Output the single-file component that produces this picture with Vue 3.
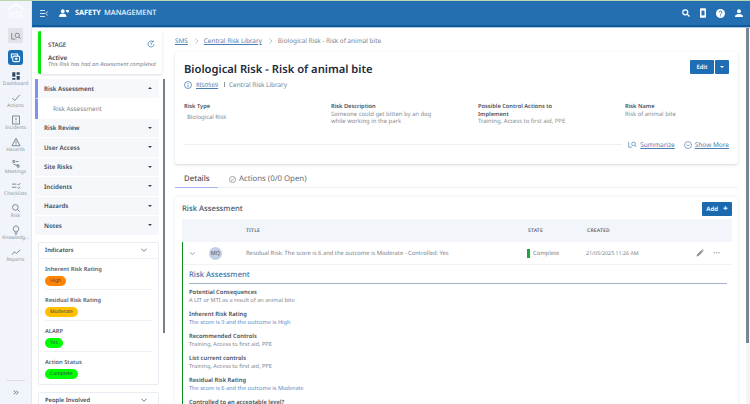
<script setup>
const nav = [
  { label: 'Dashboard', d: 'M2 2h5v7H2zM9 2h5v4H9zM2 11h5v3H2zM9 8h5v6H9z', fill: true },
  { label: 'Actions', d: 'M2 8l4 4 8-9' },
  { label: 'Incidents', d: 'M2.500 1.500h11v13h-11zM8 4.500v4M8 10.500v1.500' },
  { label: 'Hazards', d: 'M8 2l6.500 12h-13zM8 6v4.500M8 11.500v1' },
  { label: 'Meetings', d: 'M3 2.500h3v3H3zM4 8l4 2 4-1M10 10h3v3h-3zM8 4h4' },
  { label: 'Checklists', d: 'M1.500 5h7M1.500 10h7M10.500 5l1.500 1.500 2.500-3M10.500 10.500l1.500 1.500 2.500-3' },
  { label: 'Risk', d: 'M7 2.500a4.500 4.500 0 1 0 0 9 4.500 4.500 0 0 0 0-9zM10.500 10.500l3.500 3.500' },
  { label: 'Knowledg...', d: 'M8 1.500a4.500 4.500 0 0 0-2.500 8.200V11h5V9.700A4.500 4.500 0 0 0 8 1.500zM6 13h4M7 15h2' },
  { label: 'Reports', d: 'M1.500 12.500l4-5 3 3 6-6' }
]
const sections = ['Risk Review', 'User Access', 'Site Risks', 'Incidents', 'Hazards', 'Notes']
const indicators = [
  { label: 'Inherent Risk Rating', value: 'High', tone: 'orange' },
  { label: 'Residual Risk Rating', value: 'Moderate', tone: 'amber' },
  { label: 'ALARP', value: 'Yes', tone: 'green' },
  { label: 'Action Status', value: 'Complete', tone: 'green' }
]
const fields = [
  { label: 'Risk Type', lines: ['Biological Risk'], cls: 'indent' },
  { label: 'Risk Description', lines: ['Someone could get bitten by an dog', 'while working in the park'] },
  { label: 'Possible Control Actions to Implement', lines: ['Training, Access to first aid, PPE'] },
  { label: 'Risk Name', lines: ['Risk of animal bite'] }
]
const details = [
  { label: 'Potential Consequences', value: 'A LIT or MTI as a result of an animal bite' },
  { label: 'Inherent Risk Rating', value: 'The score is 9 and the outcome is High', link: true },
  { label: 'Recommended Controls', value: 'Training, Access to first aid, PPE' },
  { label: 'List current controls', value: 'Training, Access to first aid, PPE' },
  { label: 'Residual Risk Rating', value: 'The score is 6 and the outcome is Moderate', link: true },
  { label: 'Controlled to an acceptable level?', value: 'Yes' }
]
</script>

<template>
  <div class="app">
    <aside class="rail">
      <div class="logo">
        <svg width="18" height="6" viewBox="0 0 18 6"><path d="M1 5L9 1l8 4" fill="none" stroke="#fff" stroke-width="1.2" /></svg>
        <span>HSI</span>
      </div>
      <button class="rail-search">
        <svg width="10" height="8" viewBox="0 0 16 13" fill="none" stroke="#6f7d8c" stroke-width="1.400"><path d="M1 1.500v10h6" /><circle cx="10" cy="5.500" r="3.500" /><path d="M12.500 8l3 3" /></svg>
      </button>
      <button class="rail-active">
        <svg width="11" height="11" viewBox="0 0 16 16" fill="none" stroke="#fff" stroke-width="1.500"><path d="M2 9V3h9v3" /><rect x="4" y="6" width="10" height="8" rx="2" /><path d="M9 8v4M7 10h4" /></svg>
      </button>
      <nav class="rail-nav">
        <a v-for="item in nav" :key="item.label" class="rail-item">
          <svg width="10" height="10" viewBox="0 0 16 16" :fill="item.fill ? '#2c4a63' : 'none'" :stroke="item.fill ? 'none' : '#56677a'" stroke-width="1.200"><path :d="item.d" /></svg>
          <span>{{ item.label }}</span>
        </a>
      </nav>
      <div class="rail-foot">
        <svg width="6" height="5" viewBox="0 0 8 7" fill="none" stroke="#47576a" stroke-width="1.200"><path d="M1 1l2.500 2.500L1 6M4.500 1L7 3.500 4.500 6" /></svg>
      </div>
    </aside>

    <div class="shell">
      <header class="topbar">
        <div class="brand">
          <svg class="menu" width="8" height="7" viewBox="0 0 8 7" fill="none" stroke="#cfe0f0" stroke-width="1"><path d="M0 .500h5M0 3.500h5M0 6.500h5" /><path d="M7.500 1.500L6 3.500l1.500 2" /></svg>
          <svg width="10" height="8" viewBox="0 0 16 13" fill="#fff"><circle cx="6" cy="3.500" r="3" /><path d="M0 13c0-4 2.500-5.500 6-5.500s6 1.500 6 5.500zM11 1.500h5v2.500l-2 3-1-2.500h-2z" /></svg>
          <strong>SAFETY</strong><span>MANAGEMENT</span>
        </div>
        <div class="top-icons">
          <svg width="8" height="8" viewBox="0 0 16 16" fill="none" stroke="#fff" stroke-width="2.500"><circle cx="6.500" cy="6.500" r="5" /><path d="M10.500 10.500L15 15" /></svg>
          <svg width="6" height="10" viewBox="0 0 10 16"><rect width="10" height="16" rx="1.500" fill="#fff" /><rect x="2.500" y="4" width="5" height="8" fill="#2d72b2" /></svg>
          <svg width="9" height="9" viewBox="0 0 16 16"><circle cx="8" cy="8" r="8" fill="#fff" /><path d="M5.500 6a2.500 2.500 0 1 1 3.700 2.200C8.400 8.700 8 9 8 10M8 11.500V13" fill="none" stroke="#2d72b2" stroke-width="1.600" /></svg>
          <svg width="8" height="8" viewBox="0 0 16 16" fill="#fff"><circle cx="8" cy="4.500" r="4" /><path d="M0 16c0-4.500 3-6 8-6s8 1.500 8 6z" /></svg>
        </div>
      </header>

      <div class="workspace">
        <aside class="side">
          <section class="stage">
            <div class="stage-top">
              <span>STAGE</span>
              <svg width="8" height="8" viewBox="0 0 16 16" fill="none" stroke="#3f79b5" stroke-width="1.500"><path d="M14 8a6 6 0 1 1-2-4.500M12.500 1v3h-3M8 5v3l2 1" /></svg>
            </div>
            <b>Active</b>
            <em>This Risk has had an Assessment completed</em>
          </section>

          <div class="side-scroll">
            <div class="accordion">
              <div class="acc-row acc-open"><span>Risk Assessment</span><i class="caret up"></i></div>
              <div class="acc-sub">Risk Assessment</div>
              <div v-for="s in sections" :key="s" class="acc-row"><span>{{ s }}</span><i class="caret"></i></div>
            </div>

            <section class="panel">
              <div class="panel-head">
                <span>Indicators</span>
                <svg width="6" height="4" viewBox="0 0 7 4" fill="none" stroke="#54636f"><path d="M.500.500l3 3 3-3" /></svg>
              </div>
              <div v-for="ind in indicators" :key="ind.label" class="indicator">
                <label>{{ ind.label }}</label>
                <span class="pill" :class="ind.tone">{{ ind.value }}</span>
              </div>
            </section>

            <section class="panel people">
              <div class="panel-head">
                <span>People Involved</span>
                <svg width="6" height="4" viewBox="0 0 7 4" fill="none" stroke="#54636f"><path d="M.500.500l3 3 3-3" /></svg>
              </div>
            </section>
          </div>
        </aside>

        <main class="content">
          <div class="crumbs">
            <a>SMS</a>
            <svg width="4" height="6" viewBox="0 0 4 6" fill="none" stroke="#a8b2c0" stroke-width=".8"><path d="M.500.500L3 3 .500 5.500" /></svg>
            <a>Central Risk Library</a>
            <svg width="4" height="6" viewBox="0 0 4 6" fill="none" stroke="#a8b2c0" stroke-width=".8"><path d="M.500.500L3 3 .500 5.500" /></svg>
            <span>Biological Risk - Risk of animal bite</span>
          </div>

          <section class="hero">
            <div class="hero-top">
              <h1>Biological Risk - Risk of animal bite</h1>
              <div class="split">
                <button class="btn-edit">Edit</button>
                <button class="btn-drop"><i class="caret white"></i></button>
              </div>
            </div>
            <div class="meta">
              <svg width="8" height="8" viewBox="0 0 16 16" fill="none" stroke="#3f79b5" stroke-width="1.500"><circle cx="8" cy="8" r="7" /><path d="M8 7v5M8 4v1.500" /></svg>
              <a>RIS0569</a><i></i><span>Central Risk Library</span>
            </div>
            <div class="fields">
              <div v-for="f in fields" :key="f.label" class="field">
                <label>{{ f.label }}</label>
                <p v-for="l in f.lines" :key="l" :class="f.cls">{{ l }}</p>
              </div>
            </div>
            <div class="hero-foot">
              <span class="rule"></span>
              <a>
                <svg width="9" height="7" viewBox="0 0 16 13" fill="none" stroke="#4b7db3" stroke-width="1.300"><path d="M1 1.500v10h6" /><circle cx="10" cy="5.500" r="3.500" /><path d="M12.500 8l3 3" /></svg>
                <span>Summarize</span>
              </a>
              <a>
                <svg width="8" height="8" viewBox="0 0 16 16" fill="none" stroke="#4b7db3" stroke-width="1.300"><circle cx="8" cy="8" r="7" /><path d="M5 7l3 3 3-3" /></svg>
                <span>Show More</span>
              </a>
            </div>
          </section>

          <div class="tabs">
            <a class="tab on">Details</a>
            <a class="tab">
              <svg width="7" height="7" viewBox="0 0 16 16" fill="none" stroke="#6d7883" stroke-width="1.500"><circle cx="8" cy="8" r="7" /><path d="M4.500 8.500l2.500 2 4.500-5" /></svg>
              Actions (0/0 Open)
            </a>
          </div>

          <section class="assess">
            <div class="assess-head">
              <h2>Risk Assessment</h2>
              <button class="btn-add">Add<b>+</b></button>
            </div>
            <div class="table-head">
              <span class="c-title">TITLE</span>
              <span class="c-state">STATE</span>
              <span class="c-created">CREATED</span>
            </div>
            <div class="row-group">
              <div class="table-row">
                <svg class="row-chev" width="5" height="3" viewBox="0 0 7 4" fill="none" stroke="#4f7bc0"><path d="M.500.500l3 3 3-3" /></svg>
                <span class="avatar">MQ</span>
                <span class="c-text">Residual Risk: The score is 6 and the outcome is Moderate - Controlled: Yes</span>
                <span class="c-state status"><i></i>Complete</span>
                <span class="c-created">21/05/2025 11:26 AM</span>
                <svg class="row-pen" width="8" height="8" viewBox="0 0 16 16" fill="#8a9198"><path d="M1 15l1-4L11 2l3 3-9 9zM12 1l1-1 3 3-1 1z" /></svg>
                <span class="row-more">···</span>
              </div>
              <div class="detail">
                <h3>Risk Assessment</h3>
                <div v-for="d in details" :key="d.label" class="detail-item">
                  <label>{{ d.label }}</label>
                  <p :class="{ link: d.link }">{{ d.value }}</p>
                </div>
              </div>
            </div>
          </section>
        </main>
        <div class="main-scroll"><span></span></div>
      </div>
    </div>
  </div>
</template>

<style>
html, body { margin: 0; overflow: hidden; }
</style>

<style scoped>
* { box-sizing: border-box; }
.app {
  width: 750px; height: 404px; display: flex; overflow: hidden;
  font-family: "Noto Sans", "Open Sans", sans-serif; font-size: 6px; color: #6f7780;
  background: #fff; border-top: 1px solid #b9d6b0; text-rendering: geometricPrecision;
}
p { margin: 0; }
a { cursor: pointer; }
button { border: 0; padding: 0; font-family: inherit; text-rendering: inherit; }

.rail { width: 32px; flex: none; background: #f1f5fb; display: flex; flex-direction: column; align-items: center; border-right: 1px solid #e3e8ef; }
.logo { height: 20px; display: flex; flex-direction: column; align-items: center; color: #fff; font-size: 9px; line-height: 9px; font-weight: 500; padding-top: 3px; }
.rail-search { margin-top: 7px; width: 15px; height: 15px; border-radius: 2px; background: #e1e3e6; display: grid; place-items: center; }
.rail-active { margin-top: 7px; width: 15px; height: 15px; border-radius: 3px; background: #1d6fb5; display: grid; place-items: center; }
.rail-nav { margin-top: 5px; display: flex; flex-direction: column; }
.rail-item { height: 22px; padding-top: 1px; display: flex; flex-direction: column; align-items: center; color: #8b939c; font-size: 4.900px; line-height: 7px; white-space: nowrap; width: 31px; }
.rail-foot { margin-top: auto; width: 19px; height: 24px; border-top: 1px solid #dcdfe3; display: grid; place-items: center; }

.shell { flex: 1; min-width: 0; display: flex; flex-direction: column; }
.topbar { height: 26px; flex: none; background: #236fb2; border-bottom: 2px solid #0e5a9b; display: flex; align-items: center; justify-content: space-between; padding: 0 7px 0 8px; }
.brand { display: flex; align-items: center; color: #dde9f4; font-size: 7.300px; font-weight: 600; }
.brand .menu { margin-right: 11px; }
.brand strong { margin-left: 6px; margin-right: 3px; color: #fff; font-weight: 700; }
.top-icons { display: flex; align-items: center; gap: 10px; }

.workspace { flex: 1; min-height: 0; display: flex; border-top: 1px solid #a8c6e2; }

.side { width: 133px; flex: none; padding: 3px 0 0 3px; display: flex; flex-direction: column; }
.stage { margin-left: 3px; width: 124px; height: 43px; border-left: 3px solid #0be70b; border-radius: 2px; background: #fff; box-shadow: 0 1px 3px rgba(60,80,110,.2); padding: 8px 7px 0 7px; display: flex; flex-direction: column; color: #3b4550; flex: none; }
.stage-top { display: flex; justify-content: space-between; align-items: center; font-size: 6.200px; font-weight: 500; height: 10px; margin-bottom: 5px; }
.stage b { font-size: 6.400px; line-height: 7px; font-weight: 600; }
.stage em { font-size: 5.600px; line-height: 6px; color: #7f8790; white-space: nowrap; }

.side-scroll { margin-top: 5px; height: 340px; overflow: hidden; position: relative; padding-right: 4px; border-right: 2px solid transparent; background: linear-gradient(#76808c, #76808c) right 0 top 0 / 2px 254px no-repeat; background-origin: border-box; }
.accordion { display: flex; flex-direction: column; }
.acc-row { height: 19.500px; display: flex; align-items: center; justify-content: space-between; padding: 0 7px 0 9px; background: #f5f7fb; border-bottom: 1px solid #fff; color: #3f4955; font-weight: 600; font-size: 6.200px; }
.acc-open { border-left: 3px solid #7f93ea; padding-left: 6px; background: #f7f8fb; }
.acc-sub { height: 20px; display: flex; align-items: center; padding-left: 15px; color: #7d858e; border-left: 3px solid #7f93ea; font-size: 6.300px; background: #fff; }
.caret { width: 0; height: 0; border-left: 2px solid transparent; border-right: 2px solid transparent; border-top: 2px solid #39434d; }
.caret.up { border-top: 0; border-bottom: 2px solid #39434d; }
.caret.white { border-top-color: #fff; }

.panel { margin: 6px 0 0 3px; width: 121px; border: 1px solid #e8edf4; border-radius: 2px; background: #fff; padding: 0 6px; }
.panel-head { height: 16px; margin: 0 -6px; padding: 0 11px 0 6px; display: flex; align-items: center; justify-content: space-between; color: #444e59; font-weight: 600; border-bottom: 1px solid #eef1f6; font-size: 5.800px; }
.indicator { height: 31px; border-bottom: 1px solid #eef1f6; padding-top: 6px; display: flex; flex-direction: column; align-items: flex-start; }
.indicator:first-of-type { height: 28px; padding-top: 4px; }
.indicator:last-child { border-bottom: 0; height: 32px; }
.indicator label { font-size: 5.700px; line-height: 8px; font-weight: 600; color: #58626d; }
.pill { margin-top: 3px; height: 10px; padding: 0 5px; border-radius: 5px; font-size: 5px; line-height: 10px; color: #3d4348; }
.pill.orange { background: #ff8500; }
.pill.amber { background: #ffc000; }
.pill.green { background: #00ff00; }
.people { height: 30px; margin-top: 7px; }

.content { flex: 1; min-width: 0; padding: 0 0 0 10px; display: flex; flex-direction: column; }
.crumbs { height: 24px; padding-top: 1px; flex: none; display: flex; align-items: center; gap: 4px; font-size: 6.400px; color: #7b8288; }
.crumbs svg { margin: 0 1px 0 3px; }
.crumbs a { color: #4b7db3; text-decoration: underline; }

.hero { width: 563px; height: 112px; flex: none; border-radius: 3px; background: #fff; box-shadow: 0 1px 3px rgba(60,80,110,.22); padding: 8px 9px 0 9px; display: flex; flex-direction: column; }
.hero-top { display: flex; justify-content: space-between; align-items: flex-start; }
.hero h1 { margin: 1px 0 0; font-size: 11.200px; line-height: 17px; font-weight: 600; color: #1d2b3c; }
.split { display: flex; gap: 1px; }
.btn-edit, .btn-drop { height: 14px; background: #1f6db3; color: #e6eff7; font-size: 5.800px; font-weight: 700; border-radius: 1px; display: grid; place-items: center; }
.btn-edit { width: 24px; }
.btn-drop { width: 14px; }
.meta { margin-top: 2px; height: 9px; display: flex; align-items: center; gap: 3px; font-size: 6.400px; color: #7b8288; }
.meta svg { margin-right: 1px; }
.meta a { color: #4b7db3; text-decoration: underline; font-size: 5.800px; }
.meta i { width: 1px; height: 5px; background: #8b929a; margin: 0 1px 0 3px; }
.fields { margin-top: 14px; display: grid; grid-template-columns: 147px 147px 147px 1fr; }
.field { width: 88px; }
.field label { display: block; font-size: 5.700px; line-height: 7.700px; color: #4b545e; font-weight: 600; }
.field p { font-size: 5.900px; line-height: 7.700px; white-space: nowrap; color: #858c94; }
.field p.indent { padding-left: 3px; margin-top: 3px; }
.hero-foot { margin-top: auto; margin-bottom: 15px; display: flex; align-items: center; gap: 9px; }
.hero-foot .rule { flex: 1; height: 1px; background: #eceff3; margin-right: -3px; }
.hero-foot a { font-size: 6.500px; color: #4b7db3; display: flex; align-items: center; gap: 3px; }
.hero-foot a span { text-decoration: underline; }

.tabs { height: 24px; flex: none; width: 563px; display: flex; gap: 11px; border-bottom: 1px solid #f0f2f5; }
.tab { height: 24px; padding-top: 6px; font-size: 7.800px; line-height: 14px; color: #646c75; display: flex; align-items: center; gap: 3px; }
.tab.on { width: 43px; padding-left: 9px; color: #4a545e; font-weight: 500; border-bottom: 1px solid #a6b4ef; }
.assess { margin-top: 9px; width: 563px; flex: 1; min-height: 0; padding: 0 6px 0 7px; background: #fff; box-shadow: 0 0 3px rgba(60,80,110,.14); overflow: hidden; }
.assess-head { height: 22px; display: flex; align-items: center; justify-content: space-between; }
.assess-head h2 { margin: 2px 0 0; font-size: 7.700px; font-weight: 500; color: #4a5a6a; }
.btn-add { width: 30px; height: 14px; background: #1c69ad; color: #eef4f9; font-size: 6px; font-weight: 700; margin-top: 2px; display: flex; align-items: center; justify-content: center; gap: 5px; border-radius: 1px; }
.btn-add b { font-size: 8px; line-height: 8px; }

.table-head { height: 23px; background: #f2f6fb; font-size: 5px; font-weight: 600; color: #5d6670; display: flex; align-items: center; letter-spacing: .2px; }
.c-title { margin-left: 64px; width: 282px; }
.c-state { width: 59px; flex: none; }
.c-created { flex: none; white-space: nowrap; }
.row-group { border-left: 1px solid #0b8f20; }
.table-row { height: 23px; display: flex; align-items: center; border-bottom: 1px solid #f1f3f6; font-size: 5.800px; color: #7b838b; }
.row-chev { margin-left: 7px; flex: none; }
.avatar { margin-left: 14px; width: 13px; height: 13px; border-radius: 50%; background: #c2cfe4; color: #4b5a6d; font-size: 5.500px; line-height: 13px; text-align: center; flex: none; }
.c-text { margin-left: 24px; width: 281px; flex: none; white-space: nowrap; }
.status { display: flex; align-items: center; gap: 3px; }
.status i { width: 3px; height: 9px; background: #1ba63f; }
.table-row .c-created { width: 110px; font-size: 5.300px; }
.row-pen { flex: none; }
.row-more { margin-left: 9px; font-size: 9px; line-height: 8px; color: #7f868d; }
.detail { padding: 3px 5px 0 6px; }
.detail h3 { margin: 0 0 4px; height: 16px; padding-top: 2px; border-bottom: 1px solid #a6aec8; font-size: 7.700px; line-height: 11px; font-weight: 500; color: #3f74ae; }
.detail-item { height: 22px; }
.detail-item label { display: block; font-size: 5.800px; line-height: 8px; font-weight: 600; color: #48505a; }
.detail-item p { font-size: 5.600px; line-height: 9px; color: #80878f; }
.detail-item p.link { color: #6188c4; }

.main-scroll { flex: none; width: 4px; background: #f5f5f5; }
.main-scroll span { display: block; width: 3px; height: 315px; background: #7b8592; }
</style>
